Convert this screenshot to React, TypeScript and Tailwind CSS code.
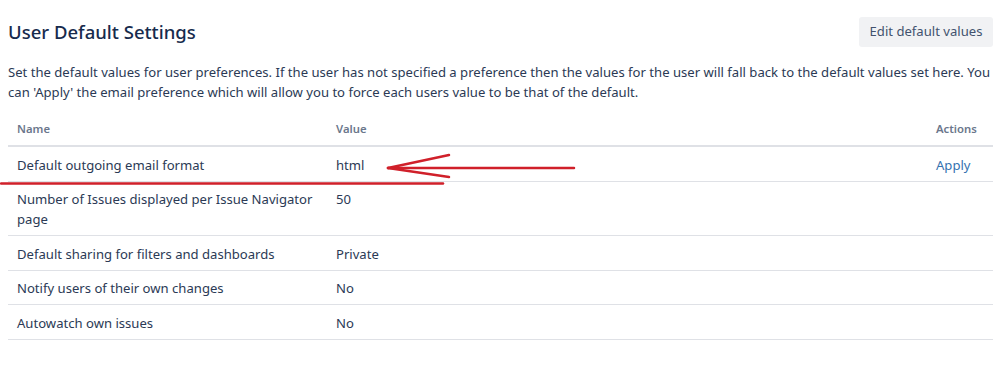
import React from "react";

const rows: { name: string; value: string; action?: string }[] = [
  { name: "Default outgoing email format", value: "html", action: "Apply" },
  { name: "Number of Issues displayed per Issue Navigator page", value: "50" },
  { name: "Default sharing for filters and dashboards", value: "Private" },
  { name: "Notify users of their own changes", value: "No" },
  { name: "Autowatch own issues", value: "No" },
];

export default function App() {
  return (
    <div
      className="relative w-[999px] h-[372px] bg-white overflow-hidden text-[#172B4D]"
      style={{ fontFamily: '"Noto Sans", "Open Sans", sans-serif' }}
    >
      <div className="pl-[8px] pr-[6px] pt-[17px]">
        <div className="flex items-start justify-between">
          <h1 className="text-[18.5px] leading-[30px] font-medium text-[#172B4D]">User Default Settings</h1>
          <button className="h-[30px] w-[134px] rounded-[3px] bg-[#F1F2F4] text-[#42526E] text-[13.1px]">
            Edit default values
          </button>
        </div>
        <p className="mt-[16px] text-[13.1px] leading-[19.5px] text-[#2B3A55]">
          Set the default values for user preferences. If the user has not specified a preference then the values for the user will fall back to the default values set here. You can 'Apply' the email preference which will allow you to force each users value to be that of the default.
        </p>
        <table className="mt-[10px] w-full border-collapse text-[13.1px] text-[#2B3A55]">
          <thead>
            <tr className="border-b-2 border-[#DFE1E6]">
              <th className="w-[319px] text-left font-semibold text-[11.3px] text-[#6B778C] pl-[9px] pt-[7px] pb-[6px] leading-[20px]">Name</th>
              <th className="text-left font-semibold text-[11.3px] text-[#6B778C] pl-[9px] pt-[7px] pb-[6px] leading-[20px]">Value</th>
              <th className="w-[66px] text-left font-semibold text-[11.3px] text-[#6B778C] pl-[9px] pt-[7px] pb-[6px] leading-[20px]">Actions</th>
            </tr>
          </thead>
          <tbody>
            {rows.map((r) => (
              <tr key={r.name} className="border-b border-[#DFE1E6]">
                <td className="pl-[9px] pr-[10px] pt-[7.5px] pb-[6px] leading-[20px] align-top">{r.name}</td>
                <td className="pl-[9px] pt-[7.5px] pb-[6px] leading-[20px] align-top">{r.value}</td>
                <td className="pl-[9px] pt-[7.5px] pb-[6px] leading-[20px] align-top text-[#3572B0]">{r.action ?? ""}</td>
              </tr>
            ))}
          </tbody>
        </table>
      </div>
      <svg className="absolute left-0 top-0 pointer-events-none" width="999" height="372">
        <g stroke="#D0202A" strokeWidth="2.5" strokeLinecap="round" fill="none">
          <line x1="1" y1="183.5" x2="443" y2="183.5" />
          <line x1="388" y1="168" x2="574" y2="168" />
          <line x1="388" y1="168" x2="449" y2="155" />
          <line x1="388" y1="168" x2="449" y2="177" />
        </g>
      </svg>
    </div>
  );
}
